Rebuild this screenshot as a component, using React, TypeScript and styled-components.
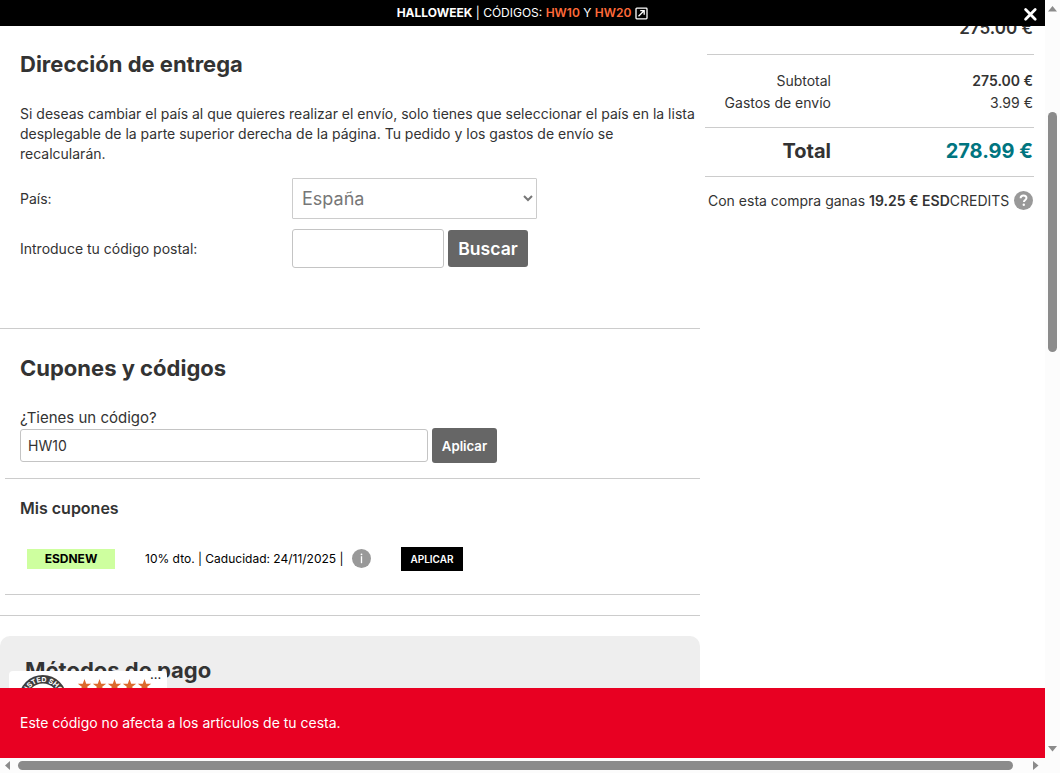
import React from "react";
import styled, { createGlobalStyle } from "styled-components";

const Global = createGlobalStyle`
  *, *::before, *::after { box-sizing: border-box; }
  body { margin: 0; background: #fff; overflow: hidden; }
  h2, h3, p { margin: 0; }
  button, input, select { font-family: inherit; }
`;

const Frame = styled.div`
  display: grid;
  grid-template: 758px 15px / 1045px 15px;
  width: 1060px;
  height: 773px;
  overflow: hidden;
  background: #fff;
  color: #333;
  font: 400 14px/20px Inter, "Liberation Sans", sans-serif;
`;
const Viewport = styled.div`
  position: relative;
  overflow: hidden;
`;
const Page = styled.main`
  display: flex;
  gap: 5px;
  height: 758px;
`;

/* Top promotional bar */
const Promo = styled.header`
  position: absolute;
  inset: 0 0 auto 0;
  height: 26px;
  display: flex;
  align-items: center;
  justify-content: center;
  background: #000;
  color: #fff;
  font-size: 12px;
  white-space: pre;
`;
const Code = styled.span`
  color: #ff6a39;
  font-weight: 600;
`;
const PromoIcon = styled.svg`
  margin-left: 4px;
`;
const Close = styled.button`
  position: absolute;
  right: 7px;
  top: 7px;
  width: 15px;
  height: 15px;
  padding: 0;
  border: 0;
  background: none;
  color: #fff;
  display: grid;
  place-items: center;
`;

/* Left column */
const Main = styled.div`
  width: 700px;
  flex: none;
  display: flex;
  flex-direction: column;
`;
const Shipping = styled.section`
  height: 329px;
  padding: 49px 0 0 20px;
  border-bottom: 1px solid #ccc;
`;
const Title = styled.h2`
  font-size: 22px;
  line-height: 30px;
  font-weight: 700;
`;
const Note = styled.p`
  margin: 25px 0 14px;
  width: 680px;
`;
const Field = styled.label`
  display: grid;
  grid-template-columns: 272px auto;
  align-items: center;
  margin-bottom: 10px;
`;
const Controls = styled.div`
  display: flex;
  align-items: center;
  gap: 4px;
`;
const Country = styled.select`
  width: 245px;
  height: 41px;
  padding: 0 0 0 5px;
  border: 1px solid #ccc;
  border-radius: 1px;
  background: #fff;
  color: #777;
  font-size: 18px;
`;
const TextInput = styled.input<{ $w: number; $h: number }>`
  width: ${(p) => p.$w}px;
  height: ${(p) => p.$h}px;
  padding: 0 7px;
  border: 1px solid #c4c4c4;
  border-radius: 3px;
  background: #fff;
  color: #333;
  font-size: 14px;
`;
const Action = styled.button<{ $w: number; $h: number; $size: number }>`
  width: ${(p) => p.$w}px;
  height: ${(p) => p.$h}px;
  padding: 0;
  border: 0;
  border-radius: 3px;
  background: #666;
  color: #fff;
  font-size: ${(p) => p.$size}px;
  font-weight: 600;
`;

const Coupons = styled.section`
  height: 287px;
  padding-top: 24px;
  border-bottom: 1px solid #ccc;
`;
const CodeForm = styled.div`
  padding-left: 20px;
`;
const CodeLabel = styled.p`
  margin-top: 25px;
  font-size: 15px;
`;
const MyCoupons = styled.div`
  margin: 15px 0 0 5px;
  height: 117px;
  padding: 19px 0 0 15px;
  border: solid #ccc;
  border-width: 1px 0;
`;
const Subtitle = styled.h3`
  font-size: 16px;
  line-height: 20px;
  font-weight: 600;
`;
const Coupon = styled.div`
  display: flex;
  align-items: center;
  height: 24px;
  margin: 29px 0 0 7px;
  color: #000;
  font-size: 12px;
`;
const Tag = styled.span`
  width: 88px;
  height: 20px;
  margin-right: 30px;
  background: #ceff9f;
  text-align: center;
  font-weight: 700;
`;
const CouponText = styled.span`
  width: 207px;
  white-space: nowrap;
`;
const Apply = styled.button`
  width: 62px;
  height: 24px;
  margin-left: 30px;
  padding: 0;
  border: 0;
  background: #000;
  color: #fff;
  font-size: 10px;
  font-weight: 600;
`;
const Round = styled.svg`
  flex: none;
  margin-bottom: 1px;
`;
const Payment = styled.section`
  flex: 1;
  margin-top: 20px;
  padding: 19px 25px;
  border-radius: 10px 10px 0 0;
  background: #eee;
`;

/* Order summary */
const Summary = styled.aside`
  width: 329px;
  padding-top: 18px;
  white-space: nowrap;
`;
const LinePrice = styled.div`
  height: 37px;
  margin-left: 2px;
  padding-right: 1px;
  border-bottom: 1px solid #ccc;
  text-align: right;
  font-size: 17px;
  line-height: 21px;
  font-weight: 600;
`;
const Amounts = styled.div`
  padding: 15px 0 13px;
`;
const Amount = styled.div`
  display: grid;
  grid-template-columns: 126px 1fr;
  line-height: 22px;
  padding-right: 1px;
  text-align: right;
`;
const Total = styled(Amount)`
  height: 50px;
  padding-bottom: 2px;
  align-items: center;
  border: solid #ccc;
  border-width: 1px 0;
  font-size: 20px;
  font-weight: 700;
`;
const TotalValue = styled.span`
  color: #007580;
`;
const Credits = styled.div`
  display: flex;
  align-items: center;
  justify-content: space-between;
  padding: 14px 1px 0 3px;
`;
const Strong = styled.b`
  font-weight: 600;
`;
const PromoName = styled.b`
  font-weight: 700;
`;

/* Floating elements */
const Trust = styled.div`
  position: absolute;
  left: 9px;
  top: 671px;
  width: 158px;
  height: 60px;
  border-radius: 4px;
  background: #fff;
`;
const Toast = styled.div`
  position: absolute;
  inset: auto 0 0 0;
  height: 70px;
  padding-left: 20px;
  background: #e80022;
  color: #fff;
  line-height: 70px;
`;

/* Scroll bars */
const VBar = styled.div`
  display: flex;
  flex-direction: column;
  align-items: center;
  background: #fcfcfc;
  padding: 6px 0;
`;
const VThumb = styled.div`
  width: 9px;
  height: 240px;
  margin: 100px 0 auto;
  border-radius: 5px;
  background: #8b8b8b;
`;
const HBar = styled.div`
  display: flex;
  align-items: center;
  background: #fcfcfc;
  padding: 0 6px 0 5px;
`;
const HThumb = styled.div`
  width: 995px;
  height: 9px;
  margin: 0 auto 0 8px;
  border-radius: 5px;
  background: #8b8b8b;
`;
const Corner = styled.div`
  background: #fcfcfc;
`;

const Arrow = ({ d, w, h }: { d: string; w: number; h: number }) => (
  <svg width={w} height={h} viewBox={`0 0 ${w} ${h}`}>
    <path d={d} fill="#8b8b8b" />
  </svg>
);

const InfoIcon = () => (
  <Round width="19" height="19" viewBox="0 0 19 19">
    <circle cx="9.5" cy="9.5" r="9.5" fill="#999" />
    <circle cx="9.5" cy="5.3" r=".9" fill="#fff" />
    <path d="M9.5 7.2v7" stroke="#fff" strokeWidth="1.3" />
  </Round>
);

const HelpIcon = () => (
  <Round width="19" height="19" viewBox="0 0 19 19">
    <circle cx="9.5" cy="9.5" r="9.5" fill="#999" />
    <path
      d="M6.6 7.2C6.6 5.4 7.9 4.5 9.5 4.5s3 .9 3 2.6c0 1.9-2.6 2-2.6 4"
      fill="none"
      stroke="#fff"
      strokeWidth="1.9"
    />
    <circle cx="9.8" cy="13.8" r="1.2" fill="#fff" />
  </Round>
);

const STAR = "M0-7 1.7-2.2 6.7-2.2 2.7.8 4.2 5.7 0 2.7-4.2 5.7-2.7.8-6.7-2.2-1.7-2.2Z";

const TrustBadge = () => (
  <Trust>
    <svg width="158" height="60" viewBox="0 0 158 60">
      <defs>
        <path id="seal" d="M16.8 28a17 17 0 0 1 34 0" />
      </defs>
      <circle cx="33.8" cy="28" r="24" fill="#3d3d3d" />
      <circle cx="33.8" cy="28" r="15.5" fill="#fff" />
      <text fill="#fff" fontSize="7" fontWeight="700" fontFamily="Inter, sans-serif">
        <textPath href="#seal" startOffset="50%" textAnchor="middle">
          TRUSTED SHOPS
        </textPath>
      </text>
      {[0, 1, 2, 3, 4].map((i) => (
        <path key={i} d={STAR} fill="#dd6a2c" transform={`translate(${75.5 + i * 15} 15)`} />
      ))}
      <text x="141" y="8" fontSize="13" fill="#222" fontFamily="Inter, sans-serif">
        ...
      </text>
    </svg>
  </Trust>
);

export default function App() {
  return (
    <Frame>
      <Global />
      <Viewport>
        <Page>
          <Main>
            <Shipping>
              <Title>Dirección de entrega</Title>
              <Note>
                Si deseas cambiar el país al que quieres realizar el envío, solo tienes que seleccionar el país en la
                lista desplegable de la parte superior derecha de la página. Tu pedido y los gastos de envío se
                recalcularán.
              </Note>
              <Field>
                País:
                <Country defaultValue="es">
                  <option value="es">España</option>
                </Country>
              </Field>
              <Field as="div">
                Introduce tu código postal:
                <Controls>
                  <TextInput $w={152} $h={39} />
                  <Action $w={80} $h={37} $size={17.6}>Buscar</Action>
                </Controls>
              </Field>
            </Shipping>
            <Coupons>
              <CodeForm>
                <Title>Cupones y códigos</Title>
                <CodeLabel>¿Tienes un código?</CodeLabel>
                <Controls>
                  <TextInput $w={408} $h={33} defaultValue="HW10" />
                  <Action $w={65} $h={35} $size={13.2}>Aplicar</Action>
                </Controls>
              </CodeForm>
              <MyCoupons>
                <Subtitle>Mis cupones</Subtitle>
                <Coupon>
                  <Tag>ESDNEW</Tag>
                  <CouponText>10% dto. | Caducidad: 24/11/2025 |</CouponText>
                  <InfoIcon />
                  <Apply>APLICAR</Apply>
                </Coupon>
              </MyCoupons>
            </Coupons>
            <Payment>
              <Title>Métodos de pago</Title>
            </Payment>
          </Main>
          <Summary>
            <LinePrice>275.00 €</LinePrice>
            <Amounts>
              <Amount>
                <span>Subtotal</span>
                <Strong>275.00 €</Strong>
              </Amount>
              <Amount>
                <span>Gastos de envío</span>
                <span>3.99 €</span>
              </Amount>
            </Amounts>
            <Total>
              <span>Total</span>
              <TotalValue>278.99 €</TotalValue>
            </Total>
            <Credits>
              <span>
                Con esta compra ganas <Strong>19.25 € ESD</Strong>CREDITS
              </span>
              <HelpIcon />
            </Credits>
          </Summary>
        </Page>
        <Promo>
          <PromoName>HALLOWEEK</PromoName> | CÓDIGOS: <Code>HW10</Code> Y <Code>HW20</Code>
          <PromoIcon width="13" height="13" viewBox="0 0 13 13" fill="none" stroke="#fff" strokeWidth="1.3">
            <rect x="1" y="1.2" width="11" height="10.6" rx=".8" />
            <path d="M3.5 9.2 9 3.8M5.2 3.7h4v4" />
          </PromoIcon>
          <Close aria-label="Cerrar">
            <svg width="15" height="15" viewBox="0 0 15 15" stroke="currentColor" strokeWidth="2.8" strokeLinecap="round">
              <path d="M2.6 2.6 12.2 12.2M12.2 2.6 2.6 12.2" />
            </svg>
          </Close>
        </Promo>
        <TrustBadge />
        <Toast>Este código no afecta a los artículos de tu cesta.</Toast>
      </Viewport>
      <VBar>
        <Arrow w={9} h={6} d="M0 5.5 4.5 0 9 5.5Z" />
        <VThumb />
        <Arrow w={9} h={6} d="M0 0 4.5 5.5 9 0Z" />
      </VBar>
      <HBar>
        <Arrow w={5} h={9} d="M5 0 0 4.5 5 9Z" />
        <HThumb />
        <Arrow w={6} h={9} d="M0 0 5.5 4.5 0 9Z" />
      </HBar>
      <Corner />
    </Frame>
  );
}
